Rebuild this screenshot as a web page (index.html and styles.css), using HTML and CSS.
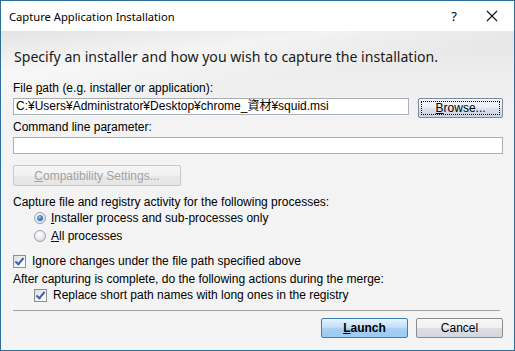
FILE: index.html
```html
<!DOCTYPE html>
<html lang="en">
<head>
    <meta charset="UTF-8">
    <title>Capture Application Installation</title>
    <link rel="stylesheet" href="styles.css">
</head>
<body>
    <div class="window">
        <div class="titlebar">
            <span class="title">Capture Application Installation</span>
            <span class="help">?</span>
            <span class="close">
                <svg width="12" height="12" viewBox="0 0 12 12">
                    <path d="M1 1 L11 11 M11 1 L1 11" stroke="#111" stroke-width="1.1" fill="none"/>
                </svg>
            </span>
        </div>

        <div class="content">
            <h1>Specify an installer and how you wish to capture the installation.</h1>

            <div class="label first">File <u>p</u>ath (e.g. installer or application):</div>
            <div class="path-row">
                <div class="textbox path">C:¥Users¥Administrator¥Desktop¥chrome_資材¥squid.msi</div>
                <button class="btn browse"><span class="focus"><u>B</u>rowse...</span></button>
            </div>

            <div class="label cmd">Command line pa<u>r</u>ameter:</div>
            <div class="textbox cmd-box"></div>

            <button class="btn compat" disabled><u>C</u>ompatibility Settings...</button>

            <div class="label capture">Capture file and registry activity for the following processes:</div>
            <div class="option indent">
                <span class="radio checked"></span>
                <span><u>I</u>nstaller process and sub-processes only</span>
            </div>
            <div class="option indent">
                <span class="radio"></span>
                <span><u>A</u>ll processes</span>
            </div>

            <div class="option ignore">
                <span class="check"></span>
                <span>I<u>g</u>nore changes under the file path specified above</span>
            </div>
            <div class="label after">After capturing is complete, do the following actions during the merge:</div>
            <div class="option indent">
                <span class="check"></span>
                <span>Replace short path names with long ones in the registry</span>
            </div>

            <div class="separator"></div>

            <div class="footer">
                <button class="btn launch"><u>L</u>aunch</button>
                <button class="btn cancel">Cancel</button>
            </div>
        </div>
    </div>
</body>
</html>
```

FILE: styles.css
```css
body {
    margin: 0;
    padding: 0;
    background-color: #fff;
}

.window {
    width: 515px;
    height: 351px;
    box-sizing: border-box;
    border: 1px solid #2d6e9e;
    display: flex;
    flex-direction: column;
    overflow: hidden;
}

.titlebar {
    height: 30px;
    flex: none;
    background-color: #fff;
    display: flex;
    align-items: center;
    font-family: "Noto Sans", sans-serif;
    font-size: 11.2px;
    color: #000;
}

.title {
    margin-left: 8px;
    flex: 1;
}

.help {
    width: 20px;
    text-align: center;
    font-size: 13px;
    margin-right: 22px;
}

.close {
    width: 14px;
    display: flex;
    margin-right: 14px;
}

.content {
    flex: 1;
    padding: 0 11px 0 12px;
    background:
        linear-gradient(172deg, rgba(255,255,255,0) 0%, rgba(255,255,255,0.55) 12%, rgba(255,255,255,0) 22%),
        linear-gradient(180deg, #e3e3e3 0px, #ededed 40px, #f3f3f3 90px, #f4f4f4 100%);
    font-family: "Liberation Sans", "Noto Sans CJK JP", sans-serif;
    font-size: 12px;
    color: #000;
    display: flex;
    flex-direction: column;
}

h1 {
    margin: 16px 0 0 1px;
    height: 20px;
    line-height: 20px;
    font-family: "Noto Sans", sans-serif;
    font-size: 14.1px;
    font-weight: normal;
    color: #1a1a1a;
}

.label {
    height: 15px;
    line-height: 15px;
    white-space: nowrap;
}

.label.first {
    margin-top: 14px;
}

.path-row {
    margin-top: 2px;
    display: flex;
    align-items: flex-start;
}

.textbox {
    height: 17px;
    box-sizing: border-box;
    border: 1px solid #a9b3c0;
    border-top-color: #abadb3;
    background-color: #fff;
    line-height: 15px;
    padding-left: 2px;
    white-space: nowrap;
    overflow: hidden;
}

.path {
    width: 397px;
}

.btn {
    box-sizing: border-box;
    border: 1px solid #8c8c8c;
    border-radius: 2px;
    background: linear-gradient(180deg, #f2f2f2 0%, #ebebeb 48%, #dddddd 52%, #cfcfcf 100%);
    font-family: "Liberation Sans", sans-serif;
    font-size: 12px;
    color: #000;
    padding: 0;
    cursor: default;
}

.browse {
    margin-left: 9px;
    width: 85px;
    height: 20px;
    padding: 2px;
    border-color: #7a8ba0;
    background: linear-gradient(180deg, #f4f6f8 0%, #edf0f4 45%, #d9e0ea 55%, #ccd5e2 100%);
}

.browse .focus {
    display: block;
    height: 100%;
    box-sizing: border-box;
    border: 1px dotted #000;
    line-height: 13px;
}

.label.cmd {
    margin-top: 1px;
    height: 16px;
    line-height: 16px;
}

.cmd-box {
    margin-top: 2px;
    width: 490px;
}

.compat {
    margin-top: 11px;
    width: 168px;
    height: 21px;
    color: #a2a2a2;
    border-color: #c8c8c8;
    background: linear-gradient(180deg, #f6f6f6 0%, #f1f1f1 50%, #e9e9e9 51%, #e6e6e6 100%);
}

.label.capture {
    margin-top: 9px;
    height: 14px;
    line-height: 14px;
}

.option {
    display: flex;
    align-items: center;
    height: 18px;
    white-space: nowrap;
}

.indent {
    padding-left: 21px;
}

.radio {
    width: 12px;
    height: 12px;
    border-radius: 50%;
    border: 1px solid #9aa2ab;
    box-sizing: border-box;
    background: radial-gradient(circle at 40% 35%, #ffffff 0%, #e9ebee 50%, #c9ced4 100%);
    margin-right: 5px;
    position: relative;
}

.radio.checked::after {
    content: "";
    position: absolute;
    left: 2px;
    top: 2px;
    width: 6px;
    height: 6px;
    border-radius: 50%;
    background: radial-gradient(circle at 40% 35%, #9cc0ee 0%, #2a5fae 70%, #1d3f80 100%);
}

.option.ignore {
    margin-top: 8px;
    height: 16px;
}

.check {
    width: 13px;
    height: 13px;
    box-sizing: border-box;
    border: 1px solid #8e8f8f;
    background: linear-gradient(135deg, #dcdcdc 0%, #f5f5f5 60%, #ffffff 100%);
    margin-right: 6px;
    position: relative;
}

.check::after {
    content: "";
    position: absolute;
    left: 3px;
    top: 0px;
    width: 3px;
    height: 7px;
    border: solid #3a62b3;
    border-width: 0 2px 2px 0;
    transform: rotate(40deg);
}

.label.after {
    margin-top: 2px;
    height: 16px;
    line-height: 16px;
}

.after + .option {
    height: 16px;
}

.separator {
    margin-top: 7px;
    height: 1px;
    width: 487px;
    background-color: #a0a0a0;
}

.footer {
    margin-top: 7px;
    display: flex;
    justify-content: flex-end;
    gap: 8px;
}

.launch {
    width: 87px;
    height: 20px;
    font-weight: bold;
    border-color: #3c7fb1;
    background: linear-gradient(180deg, #e5f2fc 0%, #c4e0f8 45%, #a6cff3 55%, #9ccaf1 100%);
}

.cancel {
    width: 87px;
    height: 20px;
    border-color: #8c8c8c;
    background: linear-gradient(180deg, #f7f7f7 0%, #f0f0f0 50%, #dcdee3 51%, #d4d7dd 100%);
}
```
